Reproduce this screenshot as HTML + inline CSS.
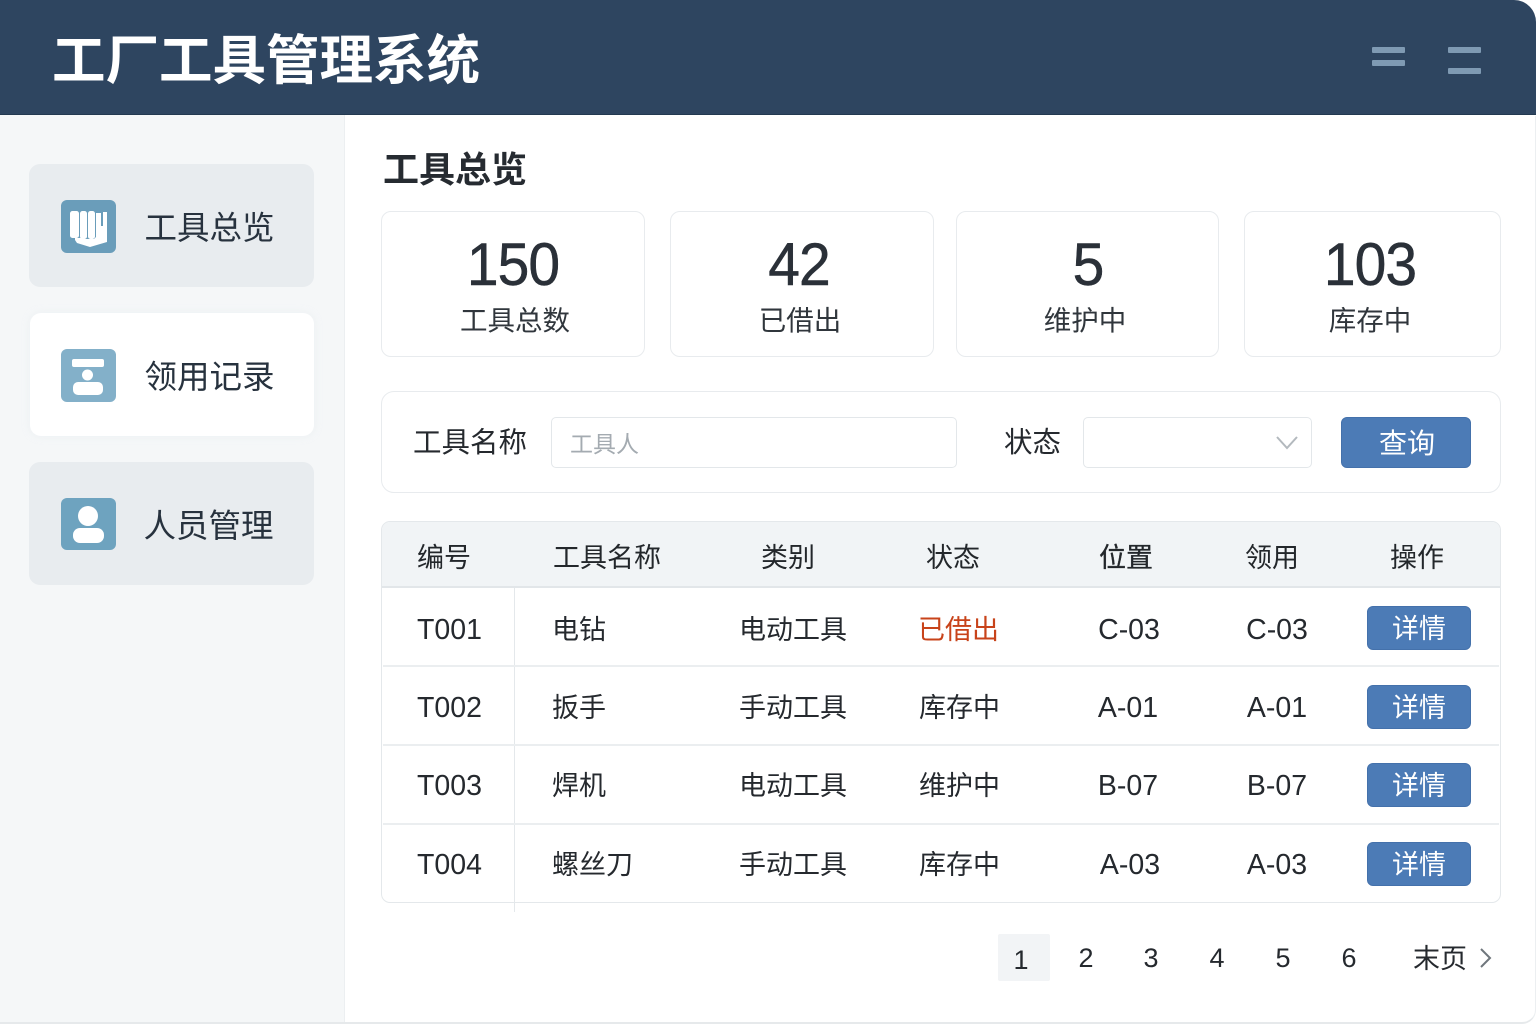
<!DOCTYPE html>
<html lang="zh-CN">
<head>
<meta charset="utf-8">
<title>工厂工具管理系统</title>
<style>
*{box-sizing:border-box;margin:0;padding:0}
html,body{width:1536px;height:1024px;overflow:hidden;background:#fff}
body{position:relative;font-family:"Liberation Sans","Noto Sans CJK SC",sans-serif;color:#22262b}
#app{position:absolute;left:0;top:0;width:1536px;height:1024px;background:#fff;overflow:hidden}
.a{position:absolute}
.t{position:absolute;white-space:nowrap;line-height:40px;height:40px;transform:translateY(-20px)}
.c{transform:translate(-50%,-20px)}
.hd{left:0;top:0;width:1536px;height:115px;background:#2e4560;border-bottom:1px solid #233950;border-radius:0 22px 0 0}
.bar{height:6px;background:#7f9ab3;border-radius:1px;width:33px}
.side{left:0;top:115px;width:345px;height:909px;background:#f5f7f8;border-right:1px solid #eceff1}
.nav{left:29px;width:285px;height:123px;border-radius:11px;background:#e8ecef}
.nav.w{background:#fff;left:30px;width:284px;box-shadow:0 0 8px rgba(220,228,234,.35)}
.ico{left:61px;width:55px;height:53px;border-radius:6px;background:#6fa0bb}
.navt{font-size:32.500px;color:#27323e}
.card{top:211px;height:146px;background:#fff;border:1px solid #e8ebee;border-radius:10px}
.num{font-size:60px;color:#2a3038;-webkit-text-stroke:.5px #2a3038;letter-spacing:-1px;transform:translate(-50%,-20px) scaleX(.95)}
.lab{font-size:27.500px;color:#30363c}
.box{background:#fff;border:1px solid #e3e7ea;border-radius:5px}
.btn{background:#4c7bb6;border:1px solid #4471ab;border-radius:6px}
.lb{font-size:28.500px;color:#25292e}
.th{font-size:27px;color:#23272b}
.td{font-size:27px;color:#25292e}
.la{font-size:28.500px}
.dt{left:1367px;width:104px;height:44px}
.dtt{font-size:27px;color:#fff;left:1419px}
.hl{left:383px;width:1116px;height:2px;background:#ebeef0}
.pg{font-size:27px;color:#25292e}
.frame{left:1400px;top:116px;width:136px;height:908px;border-right:1px solid #eceff1;border-bottom:2px solid #e6e9eb;border-radius:0 0 14px 0}
.base{left:0;top:1022px;width:1400px;height:2px;background:#e6e9eb}
</style>
</head>
<body>
<div id="app">
  <div class="a hd"></div>
  <div class="t" style="left:52px;top:62px;font-size:53.500px;font-weight:700;color:#fff">工厂工具管理系统</div>
  <div class="a bar" style="left:1372px;top:47px"></div>
  <div class="a bar" style="left:1372px;top:60px"></div>
  <div class="a bar" style="left:1448px;top:47px"></div>
  <div class="a bar" style="left:1448px;top:68px"></div>

  <div class="a side"></div>
  <div class="a frame"></div>
  <div class="a base"></div>
  <div class="a nav" style="top:164px"></div>
  <div class="a nav w" style="top:313px"></div>
  <div class="a nav" style="top:462px"></div>

  <div class="a ico" style="top:200px;background:#6a9dba">
    <svg width="55" height="53" viewBox="0 0 55 53" style="display:block">
      <rect x="9" y="11" width="9" height="27" rx="2.500" fill="#fff"/>
      <rect x="19" y="11" width="7" height="28" rx="2.500" fill="#fff"/>
      <rect x="27" y="11" width="7" height="28" rx="2.500" fill="#fff"/>
      <path d="M35 13h5v13h2V12h4v24l0 6-17 5-13-4-2-3v-2h8l2 1h9l2-2z" fill="#fff"/>
    </svg>
  </div>
  <div class="t navt" style="left:144.500px;top:228px">工具总览</div>

  <div class="a ico" style="top:349px;background:#83b0c9">
    <svg width="55" height="53" viewBox="0 0 55 53" style="display:block">
      <rect x="11" y="10" width="32" height="8" rx="2" fill="#fff"/>
      <circle cx="26.500" cy="26" r="5.500" fill="#fff"/>
      <rect x="12" y="33" width="30" height="13" rx="5" fill="#fff"/>
    </svg>
  </div>
  <div class="t navt" style="left:144.500px;top:377px">领用记录</div>

  <div class="a ico" style="top:498px;height:52px;background:#6ea3bf">
    <svg width="55" height="52" viewBox="0 0 55 52" style="display:block">
      <circle cx="27" cy="18" r="10" fill="#fff"/>
      <rect x="12" y="30" width="31" height="15" rx="7" fill="#fff"/>
    </svg>
  </div>
  <div class="t navt" style="left:143.500px;top:526px">人员管理</div>

  <div class="t" style="left:383px;top:170px;font-size:36px;font-weight:700;color:#262b31">工具总览</div>

  <div class="a card" style="left:381px;width:264px"></div>
  <div class="a card" style="left:670px;width:264px"></div>
  <div class="a card" style="left:956px;width:263px"></div>
  <div class="a card" style="left:1244px;width:257px"></div>
  <div class="t num" style="left:513px;top:265px">150</div>
  <div class="t num" style="left:799px;top:265px">42</div>
  <div class="t num" style="left:1088px;top:265px">5</div>
  <div class="t num" style="left:1370px;top:265px">103</div>
  <div class="t lab c" style="left:515px;top:321px">工具总数</div>
  <div class="t lab c" style="left:800px;top:321px">已借出</div>
  <div class="t lab c" style="left:1085px;top:321px">维护中</div>
  <div class="t lab c" style="left:1370px;top:321px">库存中</div>

  <div class="a" style="left:381px;top:391px;width:1120px;height:102px;border:1px solid #e8ebee;border-radius:13px"></div>
  <div class="t lb" style="left:413px;top:443px">工具名称</div>
  <div class="a box" style="left:551px;top:417px;width:406px;height:51px"></div>
  <div class="t" style="left:570px;top:444px;font-size:23px;color:#a4abb1">工具人</div>
  <div class="t lb" style="left:1004px;top:443px">状态</div>
  <div class="a box" style="left:1083px;top:417px;width:229px;height:51px"></div>
  <svg class="a" style="left:1274px;top:434px" width="26" height="20" viewBox="0 0 26 20"><path d="M3 3l10 11L23 3" fill="none" stroke="#b3b9be" stroke-width="2"/></svg>
  <div class="a btn" style="left:1341px;top:417px;width:130px;height:51px"></div>
  <div class="t c" style="left:1407px;top:444px;font-size:28px;color:#fff">查询</div>

  <div class="a" style="left:381px;top:521px;width:1120px;height:382px;border:1px solid #e4e8eb;border-radius:9px;overflow:hidden">
    <div class="a" style="left:0;top:0;width:1118px;height:66px;background:#f1f4f6;border-bottom:2px solid #e2e6e9"></div>
  </div>
  <div class="a" style="left:514px;top:588px;width:1px;height:324px;background:#e4e8eb"></div>
  <div class="a hl" style="top:665px"></div>
  <div class="a hl" style="top:744px"></div>
  <div class="a hl" style="top:823px"></div>

  <div class="t th" style="left:417px;top:558px">编号</div>
  <div class="t th" style="left:553px;top:558px">工具名称</div>
  <div class="t th" style="left:761px;top:558px">类别</div>
  <div class="t th" style="left:926px;top:558px">状态</div>
  <div class="t th" style="left:1099px;top:558px;-webkit-text-stroke:.3px #23272b">位置</div>
  <div class="t th" style="left:1245px;top:558px">领用</div>
  <div class="t th" style="left:1390px;top:558px">操作</div>

  <div class="t td la" style="left:417px;top:630px">T001</div>
  <div class="t td" style="left:552px;top:630px">电钻</div>
  <div class="t td" style="left:739px;top:630px">电动工具</div>
  <div class="t td" style="left:918px;top:630px;color:#c8431a">已借出</div>
  <div class="t td la c" style="left:1129px;top:630px">C-03</div>
  <div class="t td la c" style="left:1277px;top:630px">C-03</div>
  <div class="a btn dt" style="top:606px"></div>
  <div class="t dtt c" style="top:629px">详情</div>

  <div class="t td la" style="left:417px;top:708px">T002</div>
  <div class="t td" style="left:552px;top:708px">扳手</div>
  <div class="t td" style="left:739px;top:708px">手动工具</div>
  <div class="t td" style="left:919px;top:708px">库存中</div>
  <div class="t td la c" style="left:1128px;top:708px">A-01</div>
  <div class="t td la c" style="left:1277px;top:708px">A-01</div>
  <div class="a btn dt" style="top:685px"></div>
  <div class="t dtt c" style="top:708px">详情</div>

  <div class="t td la" style="left:417px;top:786px">T003</div>
  <div class="t td" style="left:552px;top:786px">焊机</div>
  <div class="t td" style="left:739px;top:786px">电动工具</div>
  <div class="t td" style="left:919px;top:786px">维护中</div>
  <div class="t td la c" style="left:1128px;top:786px">B-07</div>
  <div class="t td la c" style="left:1277px;top:786px">B-07</div>
  <div class="a btn dt" style="top:763px"></div>
  <div class="t dtt c" style="top:786px">详情</div>

  <div class="t td la" style="left:417px;top:865px">T004</div>
  <div class="t td" style="left:552px;top:865px">螺丝刀</div>
  <div class="t td" style="left:739px;top:865px">手动工具</div>
  <div class="t td" style="left:919px;top:865px">库存中</div>
  <div class="t td la c" style="left:1130px;top:865px">A-03</div>
  <div class="t td la c" style="left:1277px;top:865px">A-03</div>
  <div class="a btn dt" style="top:842px"></div>
  <div class="t dtt c" style="top:865px">详情</div>

  <div class="a" style="left:998px;top:934px;width:52px;height:47px;background:#f2f4f6;border-radius:2px"></div>
  <div class="t pg c" style="left:1021px;top:960px">1</div>
  <div class="t pg c" style="left:1086px;top:958px">2</div>
  <div class="t pg c" style="left:1151px;top:958px">3</div>
  <div class="t pg c" style="left:1217px;top:958px">4</div>
  <div class="t pg c" style="left:1283px;top:958px">5</div>
  <div class="t pg c" style="left:1349px;top:958px">6</div>
  <div class="t pg" style="left:1413px;top:959px">末页</div>
  <svg class="a" style="left:1478px;top:946px" width="16" height="24" viewBox="0 0 16 24"><path d="M3 3l9 9-9 9" fill="none" stroke="#6f767c" stroke-width="2"/></svg>
</div>
</body>
</html>
